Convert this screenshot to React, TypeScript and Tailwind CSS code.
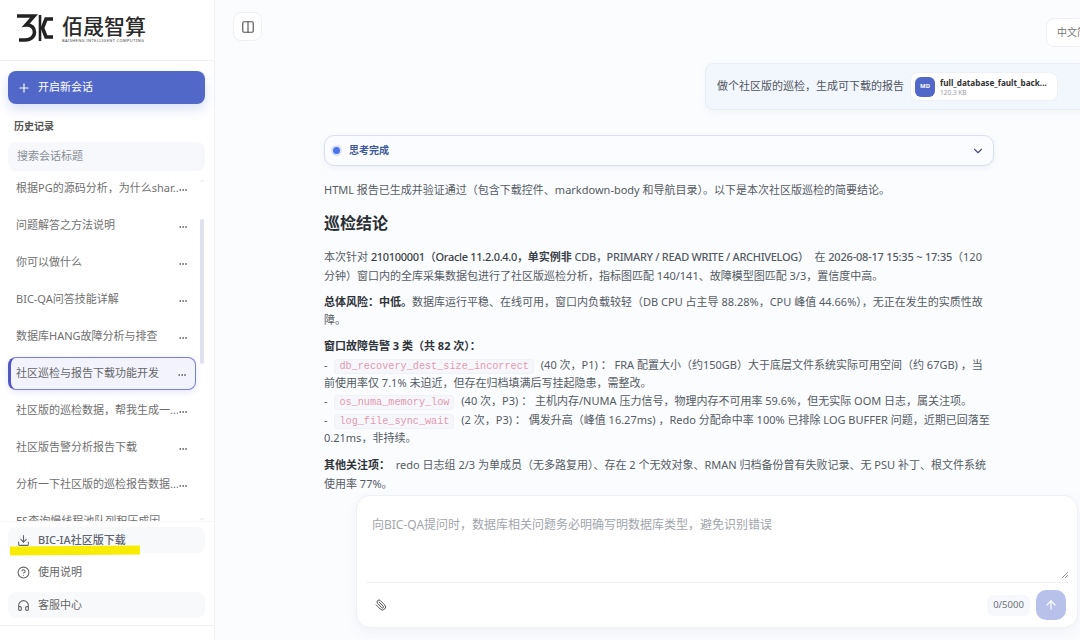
import { ChevronDown, ChevronUp, Download, CircleHelp, Headphones, Paperclip, ArrowUp, Plus, Columns2, Ellipsis } from "lucide-react";

const sessions = [
  "根据PG的源码分析，为什么shar...",
  "问题解答之方法说明",
  "你可以做什么",
  "BIC-QA问答技能详解",
  "数据库HANG故障分析与排查",
  "社区巡检与报告下载功能开发",
  "社区版的巡检数据，帮我生成一...",
  "社区版告警分析报告下载",
  "分析一下社区版的巡检报告数据...",
  "ES查询慢线程池队列积压成因",
];

const Logo = () => (
  <div className="flex items-start gap-[9px]">
    <svg width="36" height="28" viewBox="0 0 36 28" fill="none" stroke="#222" strokeWidth="3.6">
      <path d="M0 2 H17 L9 11 C20 10 21 26 8 26 H2" />
      <path d="M23 1 V27" strokeWidth="2.6" />
      <path d="M36 5 H29 L25.5 14 L29 23 H36" />
    </svg>
    <div className="flex flex-col">
      <span className="text-[21px] leading-[24px] font-medium text-[#2a2a2a]">佰晟智算</span>
      <span className="text-[4px] leading-[6px] tracking-[0.38px] text-[#444] whitespace-nowrap">BAISHENG INTELLIGENT COMPUTING</span>
    </div>
  </div>
);

const Sidebar = () => (
  <aside className="relative w-[215px] shrink-0 bg-white border-r border-[#eef0f4] flex flex-col h-[640px]">
    <div className="h-[61px] shrink-0 border-b border-[#eef0f4] pl-[17px] pt-[14px]">
      <Logo />
    </div>
    <div className="px-2 pt-[10px]">
      <button className="w-[197px] h-[33px] rounded-lg bg-[#5168c9] text-white text-[11px] flex items-center pl-[9px] gap-[7px] shadow-[0_5px_12px_rgba(81,104,201,0.22)]">
        <Plus size={14} />
        开启新会话
      </button>
      <div className="mt-[15px] pl-[6px] text-[10px] leading-[14px] font-bold text-[#555]">历史记录</div>
      <div className="mt-[9px] h-[29px] w-[197px] rounded-lg bg-[#f7f8fb] pl-[9px] flex items-center text-[11px] text-[#8a8f98]">搜索会话标题</div>
    </div>
    <div className="relative h-[350px] overflow-hidden pl-2 shrink-0">
      <div className="flex flex-col gap-[4px] pt-[1px]">
        {sessions.map((title, i) => (
          <div
            key={title}
            className={
              i === 5
                ? "w-[188px] h-[33px] shrink-0 flex items-center justify-between pl-[5px] pr-[8px] rounded-lg bg-[#f2f3fd] border border-[#7b7fd6] border-l-[3px] border-l-[#5158c4] shadow-[0_2px_6px_rgba(81,88,196,0.15)] text-[#666] text-[11px]"
                : "w-[188px] h-[33px] shrink-0 flex items-center justify-between pl-[8px] pr-[8px] text-[#707070] text-[11px]"
            }
          >
            <span className="whitespace-nowrap overflow-hidden">{title}</span>
            <Ellipsis size={10} className="shrink-0 text-[#555] mt-[3px]" />
          </div>
        ))}
      </div>
      <ChevronUp size={6} className="absolute left-[199px] top-[7px] text-[#c4c7cf]" />
      <div className="absolute left-[200px] top-[48px] w-[4px] h-[145px] rounded bg-[#dfe2ee]" />
      <ChevronDown size={6} className="absolute left-[199px] top-[345px] text-[#c4c7cf]" />
    </div>
    <div className="px-2 flex flex-col gap-[6.5px] pt-[5px] border-t border-[#f6f7f9]">
      <div className="h-[26px] w-[197px] rounded-lg bg-[#f8f9fb] flex items-center pl-[9px] gap-[8px] text-[11px] text-[#5f6570]">
        <Download size={13} />
        <span className="font-medium">BIC-IA社区版下载</span>
      </div>
      <div className="h-[26px] w-[197px] rounded-lg flex items-center pl-[9px] gap-[8px] text-[11px] text-[#666]">
        <CircleHelp size={13} />
        使用说明
      </div>
      <div className="h-[26px] w-[197px] rounded-lg bg-[#f8f9fb] flex items-center pl-[9px] gap-[8px] text-[11px] text-[#666]">
        <Headphones size={13} />
        客服中心
      </div>
    </div>
    <div className="mt-[7px] border-t border-[#eef0f4]" />
    <div className="absolute left-[10px] top-[546px] w-[130px] h-[9px] bg-[#f8ec05] -rotate-[0.5deg]" />
  </aside>
);

const Code = ({ children }: { children: string }) => (
  <code className="mx-[4px] px-[4px] py-[1px] rounded bg-[#f6f7fa] border border-[#f0f1f5] text-[#e39ab0] text-[10.2px] leading-none font-['Liberation_Mono',monospace]">
    {children}
  </code>
);

const Report = () => (
  <div className="w-[670px] ml-[109px] text-[11px] leading-[18.3px] text-[#555b64]">
    <div className="h-[31px] rounded-[10px] border border-[#d9def2] bg-[#fbfcff] shadow-[0_2px_6px_rgba(90,100,170,0.08)] flex items-center justify-between pl-[8px] pr-[8px]">
      <div className="flex items-center gap-[9px]">
        <span className="w-[7px] h-[7px] rounded-full bg-[#4a74e8] shadow-[0_0_0_2px_rgba(74,116,232,0.18)]" />
        <span className="font-bold text-[#3d5a9c] text-[10px]">思考完成</span>
      </div>
      <ChevronDown size={14} className="text-[#4a5282]" />
    </div>
    <p className="mt-[15px]">HTML 报告已生成并验证通过（包含下载控件、markdown-body 和导航目录）。以下是本次社区版巡检的简要结论。</p>
    <h2 className="mt-[13px] text-[16px] leading-[22px] font-bold text-[#2a2e35]">巡检结论</h2>
    <p className="mt-[14px]">
      本次针对 <span className="font-medium tracking-[-0.3px] text-[#3a3f47]">210100001（Oracle 11.2.0.4.0，</span><b className="font-bold text-[#3a3f47]">单实例非</b> <span className="font-medium tracking-[-0.3px]">CDB，PRIMARY / READ WRITE / ARCHIVELOG）</span>&nbsp; 在 <span className="font-medium tracking-[-0.2px]">2026-08-17 15:35 ~ 17:35</span>（120
      <br />分钟）窗口内的全库采集数据包进行了社区版巡检分析，指标图匹配 140/141、故障模型图匹配 3/3，置信度中高。
    </p>
    <p className="mt-[8px]">
      <b className="font-bold text-[#2f333a]">总体风险：中低。</b>数据库运行平稳、在线可用，窗口内负载较轻（DB CPU 占主导 88.28%，CPU 峰值 44.66%），无正在发生的实质性故障。
    </p>
    <p className="mt-[8px]">
      <b className="font-bold text-[#2f333a]">窗口故障告警 3 类（共 82 次）：</b>
      <br />- <Code>db_recovery_dest_size_incorrect</Code> (40 次，P1) ： FRA 配置大小（约150GB）大于底层文件系统实际可用空间（约 67GB) ，当
      <br />前使用率仅 7.1% 未迫近，但存在归档填满后写挂起隐患，需整改。
      <br />- <Code>os_numa_memory_low</Code> (40 次，P3) ： 主机内存/NUMA 压力信号，物理内存不可用率 59.6%，但无实际 OOM 日志，属关注项。
      <br />- <Code>log_file_sync_wait</Code> (2 次，P3) ： 偶发升高（峰值 16.27ms) ，Redo 分配命中率 100% 已排除 LOG BUFFER 问题，近期已回落至 0.21ms，非持续。
    </p>
    <p className="mt-[9px]">
      <b className="font-bold text-[#2f333a]">其他关注项：</b>&nbsp; redo 日志组 2/3 为单成员（无多路复用）、存在 2 个无效对象、RMAN 归档备份曾有失败记录、无 PSU 补丁、根文件系统使用率 77%。
    </p>
  </div>
);

const Composer = () => (
  <div className="relative ml-[141px] w-[722px] h-[133px] rounded-[14px] bg-white border border-[#eef0f4] shadow-[0_4px_14px_rgba(60,70,110,0.06)] flex flex-col shrink-0">
    <div className="relative h-[87px] mx-[9px] pl-[6px] pt-[21px] text-[12px] leading-[16px] text-[#a2a6ad] border-b border-[#f0f1f4]">
      向BIC-QA提问时，数据库相关问题务必明确写明数据库类型，避免识别错误
      <svg className="absolute right-0 bottom-[4px]" width="7" height="7" viewBox="0 0 7 7" stroke="#777" strokeWidth="0.8">
        <path d="M1 7 L7 1 M4 7 L7 4" />
      </svg>
    </div>
    <div className="flex-1 flex items-center justify-between pl-[18px] pr-[11px]">
      <Paperclip size={12} className="text-[#555] -scale-x-100" />
      <div className="flex items-center gap-[6px]">
        <span className="w-[43px] h-[21px] rounded-md bg-[#f7f8fb] flex items-center justify-center text-[9.5px] text-[#6a6f78]">0/5000</span>
        <span className="w-[30px] h-[30px] rounded-[10px] bg-[#b7c1ea] flex items-center justify-center text-white">
          <ArrowUp size={14} />
        </span>
      </div>
    </div>
  </div>
);

export default function App() {
  return (
    <div className="w-[1080px] h-[640px] overflow-hidden flex bg-[#fbfcfe] font-['Noto_Sans','Noto_Sans_CJK_SC',sans-serif]">
      <Sidebar />
      <main className="relative flex-1 min-w-0 flex flex-col h-[640px] overflow-hidden">
        <div className="h-[63px] shrink-0 flex items-start justify-between pl-[18px]">
          <button className="mt-[12px] w-[29px] h-[29px] rounded-lg bg-white border border-[#eef0f4] flex items-center justify-center text-[#555]">
            <Columns2 size={14} />
          </button>
          <div className="mt-[18px] -mr-[10px] w-[44px] h-[29px] rounded-l-lg bg-white border border-[#eef0f4] pl-[10px] flex items-center text-[10px] text-[#777] whitespace-nowrap overflow-hidden">中文简体</div>
        </div>
        <div className="h-[47px] shrink-0 ml-[490px] w-[400px] rounded-lg bg-[#f2f6fd] border border-[#e8eef8] shadow-[0_4px_10px_rgba(90,110,170,0.05)] flex items-center pl-[11px] gap-[6px] text-[11px] text-[#4f5560]">
          <span className="whitespace-nowrap">做个社区版的巡检，生成可下载的报告</span>
          <div className="w-[148px] h-[29px] rounded-lg bg-white border border-[#edf0f7] flex items-center pl-[4px] gap-[5px]">
            <span className="w-[20px] h-[20px] rounded-md bg-[#5168c9] text-white text-[6px] font-bold flex items-center justify-center">MD</span>
            <div className="flex flex-col">
              <span className="text-[8.2px] leading-[11px] font-bold text-[#333]">full_database_fault_back...</span>
              <span className="text-[6.5px] leading-[9px] text-[#9a9ea6]">120.3 KB</span>
            </div>
          </div>
        </div>
        <div className="h-[385px] shrink-0 overflow-hidden pt-[25px]">
          <Report />
        </div>
        <Composer />
      </main>
    </div>
  );
}
